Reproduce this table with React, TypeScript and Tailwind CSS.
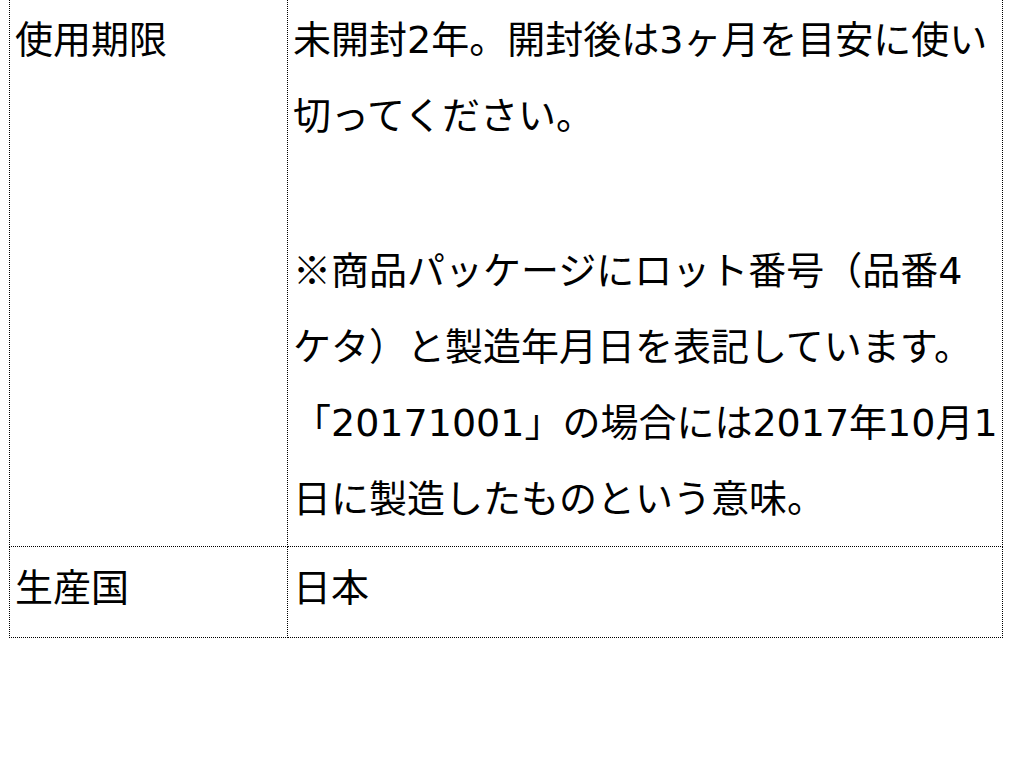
import React from "react";

export default function App() {
  const font = { fontFamily: '"DejaVu Sans", "Noto Sans CJK JP", sans-serif' };
  const cjk = { fontFamily: '"Noto Sans CJK JP", sans-serif' };
  const base =
    "border border-dotted border-black align-top pl-[5px] pr-0 text-[38px] leading-[76px] text-black font-normal whitespace-nowrap overflow-hidden";
  const cell1 = base + " pt-[2px] pb-[9px]";
  const cell2 = base + " pt-[3px] pb-[11px]";
  return (
    <div className="w-[1010px] h-[762px] bg-white overflow-hidden" style={font}>
      <table className="ml-[9px] mt-[-1px] w-[994px] border-collapse table-fixed">
        <colgroup>
          <col className="w-[278px]" />
          <col />
        </colgroup>
        <tbody>
          <tr>
            <td className={cell1}>使用期限</td>
            <td className={cell1}>
              未開封2年。開封後は3ヶ月を目安に使い
              <br />
              切ってください。
              <br />
              <br />
              <span style={cjk}>※</span>商品パッケージにロット番号（品番4
              <br />
              ケタ）と製造年月日を表記しています。
              <br />
              「20171001」の場合には2017年10月1
              <br />
              日に製造したものという意味。
            </td>
          </tr>
          <tr>
            <td className={cell2}>生産国</td>
            <td className={cell2}>日本</td>
          </tr>
        </tbody>
      </table>
    </div>
  );
}
